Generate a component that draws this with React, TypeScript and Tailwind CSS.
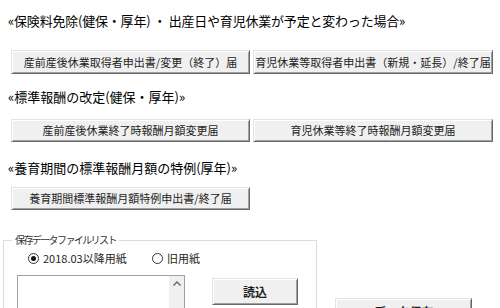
import React from 'react'

interface FormButtonProps {
  label: string
  className?: string
  bold?: boolean
}

// VBA UserForm style 3D button
function FormButton({ label, className = '', bold = false }: FormButtonProps) {
  return (
    <button
      type="button"
      className={`flex items-center justify-center bg-[#f0f0f0] border border-t-[#e3e3e3] border-l-[#e3e3e3] border-r-[#696969] border-b-[#696969] shadow-[inset_1px_1px_0_#ffffff,inset_-1px_-1px_0_#a0a0a0] text-[#1e1e1e] whitespace-nowrap ${bold ? 'font-bold text-[12px]' : 'text-[11px]'} ${className}`}
    >
      {label}
    </button>
  )
}

function Radio({ label, checked, className = '' }: { label: string; checked?: boolean; className?: string }) {
  return (
    <label className={`flex items-center gap-[4px] text-[11px] leading-[14px] text-[#1e1e1e] ${className}`}>
      <span className="w-[11px] h-[11px] rounded-full border border-[#333] bg-white flex items-center justify-center">
        {checked && <span className="w-[5px] h-[5px] rounded-full bg-[#111]" />}
      </span>
      {label}
    </label>
  )
}

export default function App() {
  return (
    <div className="w-[500px] h-[308px] overflow-hidden bg-white font-['Noto_Sans_CJK_JP',sans-serif] text-black">
      {/* 保険料免除 */}
      <h3 className="mt-[13px] ml-[8px] text-[13px] leading-[16px] whitespace-nowrap tracking-[-0.2px]">
        «保険料免除(健保・厚年) ・ 出産日や育児休業が予定と変わった場合»
      </h3>
      <div className="mt-[21px] flex pl-[11px] gap-[3px]">
        <FormButton label="産前産後休業取得者申出書/変更（終了）届" className="w-[239px] h-[24px]" />
        <FormButton label="育児休業等取得者申出書（新規・延長）/終了届" className="w-[240px] h-[24px]" />
      </div>

      {/* 標準報酬の改定 */}
      <h3 className="mt-[15px] ml-[8px] text-[13px] leading-[16px] whitespace-nowrap">
        «標準報酬の改定(健保・厚年)»
      </h3>
      <div className="mt-[14px] flex pl-[11px] gap-[3px]">
        <FormButton label="産前産後休業終了時報酬月額変更届" className="w-[239px] h-[23px]" />
        <FormButton label="育児休業等終了時報酬月額変更届" className="w-[240px] h-[23px]" />
      </div>

      {/* 養育期間の特例 */}
      <h3 className="mt-[18px] ml-[8px] text-[13px] leading-[16px] whitespace-nowrap">
        «養育期間の標準報酬月額の特例(厚年)»
      </h3>
      <div className="mt-[11px] flex pl-[11px]">
        <FormButton label="養育期間標準報酬月額特例申出書/終了届" className="w-[239px] h-[23px]" />
      </div>

      {/* 保存データファイルリスト */}
      <div className="mt-[24px] flex items-start">
        <fieldset className="ml-[3px] w-[314px] h-[120px] border border-[#dcdcdc]">
          <legend className="ml-[8px] px-[3px] text-[10px] leading-[12px] tracking-[-1.6px] text-[#333]">
            保存データファイルリスト
          </legend>
          <div className="mt-[5px] flex pl-[24px]">
            <Radio label="2018.03以降用紙" checked className="w-[124px]" />
            <Radio label="旧用紙" />
          </div>
          <div className="mt-[10px] flex items-start">
            <div className="ml-[13px] w-[168px] h-[60px] border border-[#a0a0a0] bg-white flex justify-end">
              <div className="w-[15px] h-full bg-[#f0f0f0] flex justify-center pt-[5px]">
                <svg width="8" height="5" viewBox="0 0 8 5" fill="none">
                  <path d="M0.5 4.5L4 1L7.5 4.5" stroke="#606060" strokeWidth="1.3" />
                </svg>
              </div>
            </div>
            <FormButton label="読込" bold className="ml-[27px] mt-[3px] w-[86px] h-[27px]" />
          </div>
        </fieldset>
        <FormButton label="データ保存" bold className="ml-[18px] mt-[64px] w-[137px] h-[27px]" />
      </div>
    </div>
  )
}
